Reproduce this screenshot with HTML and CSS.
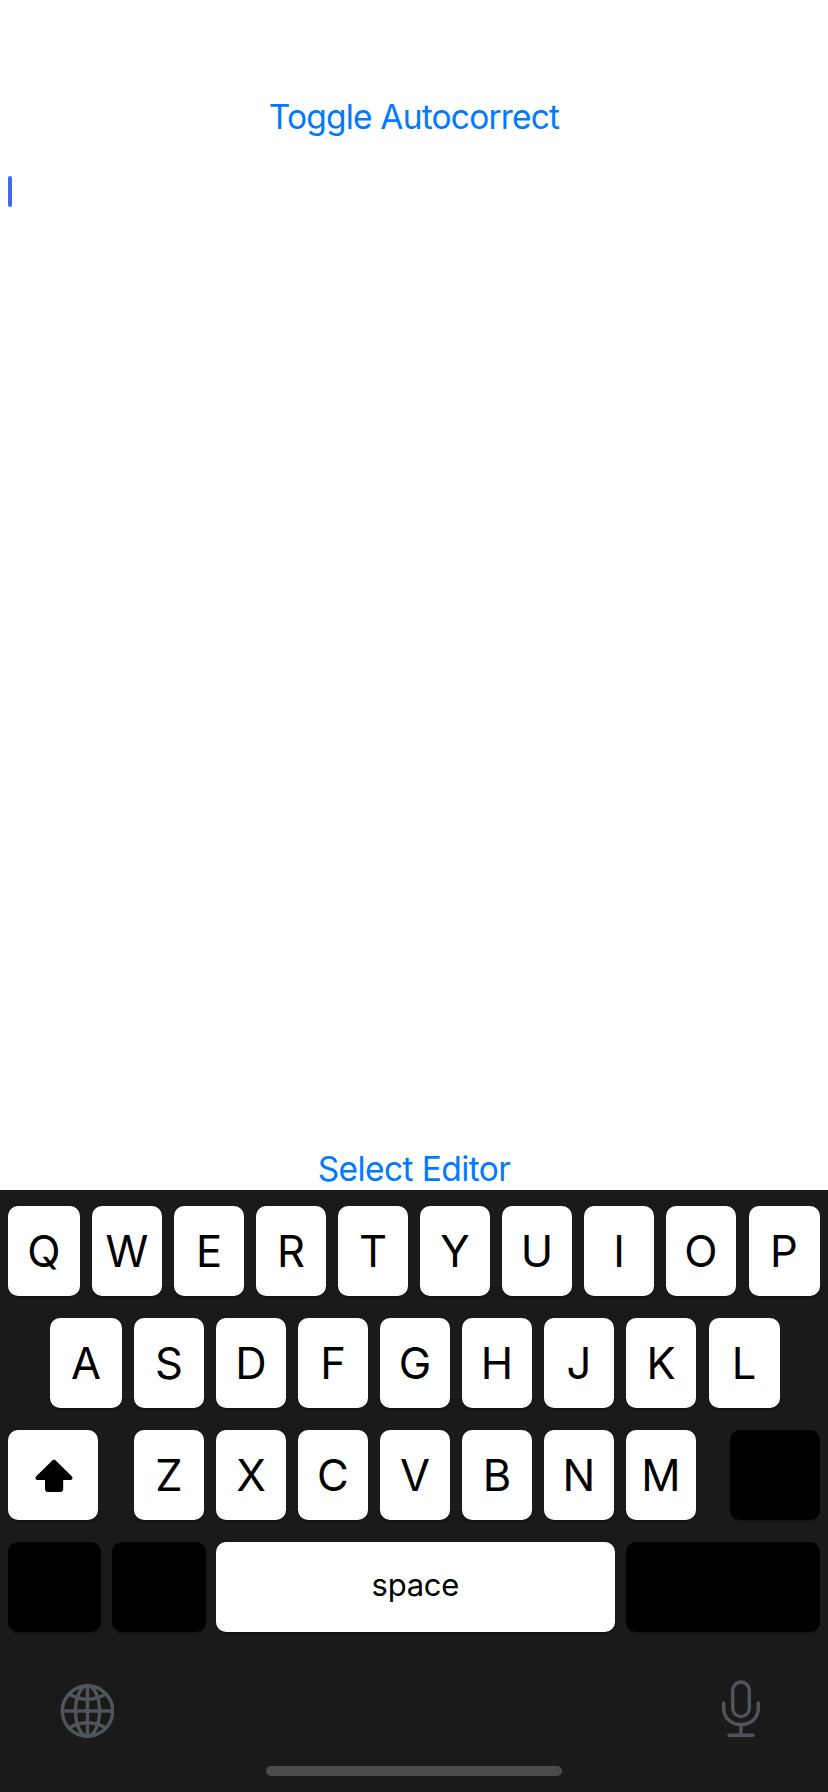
FILE: index.html
```html
<!DOCTYPE html>
<html lang="en">
<head>
<meta charset="utf-8">
<title>Editor</title>
<link rel="stylesheet" href="styles.css">
</head>
<body>
<div class="screen">
  <main class="editor">
    <button class="link link-toggle"><span>Toggle Autocorrect</span></button>
    <div class="text-area"><div class="caret"></div></div>
    <button class="link link-select"><span>Select Editor</span></button>
  </main>
  <section class="keyboard">
    <div class="row row-top">
      <button class="key edge">Q</button><button class="key">W</button><button class="key">E</button><button class="key">R</button><button class="key">T</button><button class="key">Y</button><button class="key">U</button><button class="key">I</button><button class="key">O</button><button class="key last">P</button>
    </div>
    <div class="row row-home">
      <button class="key edge">A</button><button class="key">S</button><button class="key">D</button><button class="key">F</button><button class="key">G</button><button class="key">H</button><button class="key">J</button><button class="key">K</button><button class="key last">L</button>
    </div>
    <div class="row row-bottom">
      <button class="key shift" aria-label="Shift">
        <svg width="38" height="33" viewBox="0 0 38 33"><path d="M17.800 1Q19 0 20.200 1L37 17.600Q38.400 20.400 36 21H28.200V29.500Q28.200 33 25 33H13Q10 33 10 29.500V21H2Q-.4 20.400 1 17.600Z"/></svg>
      </button>
      <div class="letters">
        <button class="key">Z</button><button class="key">X</button><button class="key">C</button><button class="key">V</button><button class="key">B</button><button class="key">N</button><button class="key">M</button>
      </div>
      <button class="key dark delete" aria-label="Delete"></button>
    </div>
    <div class="row row-space">
      <button class="key dark numbers" aria-label="Numbers"></button>
      <button class="key dark emoji" aria-label="Emoji"></button>
      <button class="key space">space</button>
      <button class="key dark return" aria-label="Return"></button>
    </div>
    <div class="tools">
      <svg class="globe" width="54" height="54" viewBox="0 0 54 54">
        <circle cx="27.500" cy="27" r="25.200"/>
        <ellipse cx="27.500" cy="27" rx="12" ry="25.200"/>
        <path d="M27.500 2V52M2.500 27H52.500M9 10Q27.500 20.500 46 10M9 44Q27.500 33.500 46 44"/>
      </svg>
      <svg class="mic" width="38" height="58" viewBox="0 0 38 58">
        <rect x="10.700" y="2" width="16.600" height="34.600" rx="8.300"/>
        <path d="M1.700 23V28C1.700 38 9 44.500 19 44.500S36.300 38 36.300 28V23M19 44.500V55M7 55.300H31"/>
      </svg>
    </div>
    <div class="home-bar"></div>
  </section>
</div>
</body>
</html>
```
FILE: styles.css
```css
* { box-sizing: border-box; }
body { margin: 0; background: #fff; font-family: Inter, "Liberation Sans", sans-serif; }
button { border: 0; padding: 0; margin: 0; font-family: inherit; }
svg { display: block; }
.screen { width: 828px; height: 1792px; display: flex; flex-direction: column; overflow: hidden; }
.editor { height: 1190px; padding-top: 97px; display: flex; flex-direction: column; }
.link { display: flex; justify-content: center; height: 41px; flex: none; background: none; color: #007aff; font-size: 33.500px; line-height: 41px; white-space: nowrap; }
.link-toggle { letter-spacing: -0.800px; }
.link-select { letter-spacing: -0.580px; }
.text-area { flex: 1; padding: 38px 8px 0; }
.caret { width: 4px; height: 31px; border-radius: 2px; background: #4169ef; }
.keyboard { height: 602px; padding: 16px 8px; background: #1a1a1a; display: flex; flex-direction: column; }
.row { display: flex; height: 90px; margin-bottom: 22px; gap: 12px; flex: none; }
.row-home { padding-left: 42px; }
.key { width: 70px; height: 90px; flex: none; border-radius: 10px; background: #fff; color: #000; box-shadow: 0 2px 0 #111; font-size: 43.500px; font-weight: 400; line-height: 90px; display: flex; justify-content: center; }
.edge { width: 72px; }
.last { width: 71px; margin-left: 0.500px; }
.row-bottom { justify-content: space-between; gap: 0; }
.letters { display: flex; gap: 12px; margin-left: 2px; }
.shift, .delete { width: 90px; }
.shift { align-items: center; padding-left: 2px; }
.dark { background: #000; box-shadow: 0 2px 0 #151515; }
.row-space { gap: 0; margin-bottom: 0; }
.numbers { width: 93px; margin-right: 11px; }
.emoji { width: 94px; margin-right: 10px; }
.space { width: 398.500px; margin-right: 11.500px; padding-top: 1px; font-size: 31px; line-height: 84px; letter-spacing: -0.300px; }
.return { width: 194px; }
.tools { display: flex; justify-content: space-between; align-items: flex-start; height: 134px; padding: 48px 60px 0 52px; flex: none; }
.tools svg { fill: none; stroke: #50555c; stroke-width: 3.400; stroke-linecap: round; }
.globe { margin-top: 4px; }
.home-bar { width: 296px; height: 10px; border-radius: 5px; background: #4b4b4b; align-self: center; flex: none; }
```
